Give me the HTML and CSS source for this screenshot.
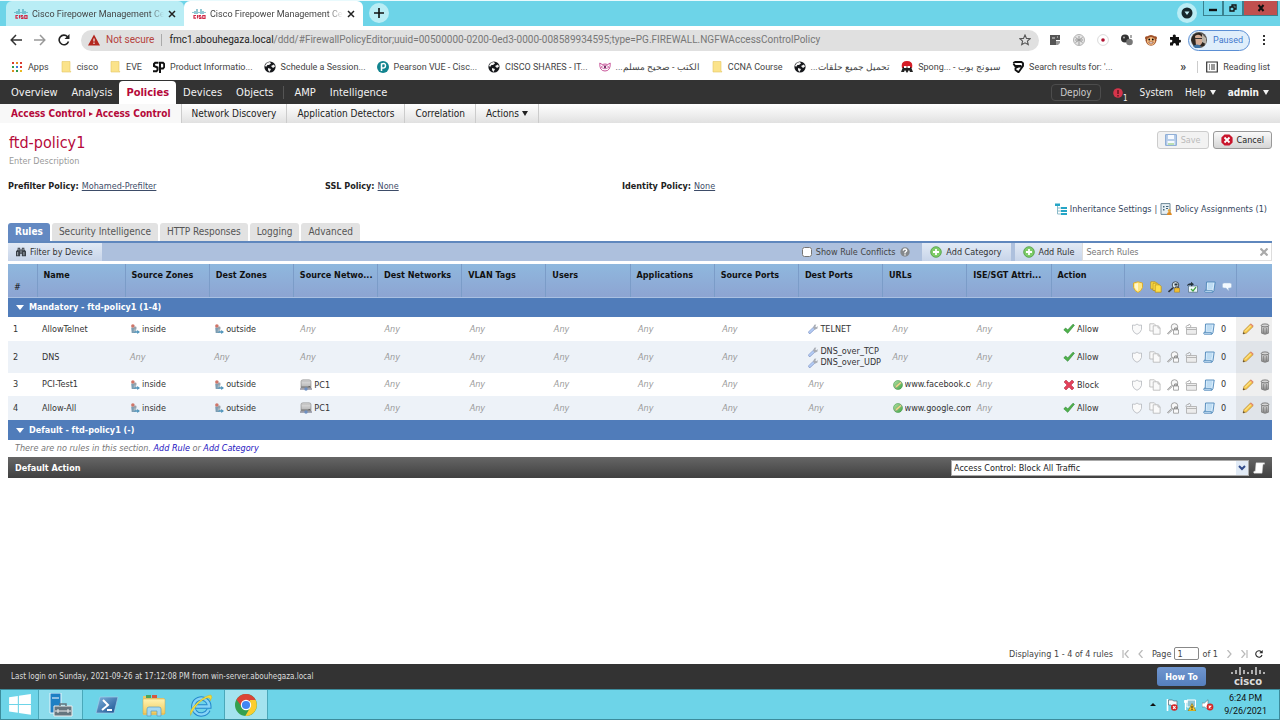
FILE: index.html
```html
<!DOCTYPE html>
<html lang="en">
<head>
<meta charset="utf-8">
<title>Cisco Firepower Management Center</title>
<link rel="stylesheet" href="styles.css">
</head>
<body>
<svg class="defs" aria-hidden="true">
  <defs>
    <linearGradient id="gfolder" x2="0" y2="1"><stop stop-color="#fff3b0"/><stop offset="1" stop-color="#f0c95a"/></linearGradient>
    <linearGradient id="ggreen" x2="1" y2="1"><stop stop-color="#b4e3a4"/><stop offset="1" stop-color="#3fa544"/></linearGradient>
    <linearGradient id="ggrey" x2="0" y2="1"><stop stop-color="#d8d8d8"/><stop offset="1" stop-color="#858585"/></linearGradient>
    <linearGradient id="gps" x2="1" y2="1"><stop stop-color="#7fb2de"/><stop offset="1" stop-color="#174f8d"/></linearGradient>
  </defs>
  <symbol id="favicon" viewBox="0 0 14 10"><path d="M1 3v1M3 2v3M5 0v5M7 3v1M9 0v5M11 2v3M13 3v1" stroke="#3b9bb0" stroke-width="1.1"/><path d="M4 6.500H2v2.600h2M5.500 6v3.600M9 6.500H7.200V8H9v1.500H7M10.800 6.500H13v3h-2.200z" stroke="#d02c4a" stroke-width="1.200" fill="none"/></symbol>
  <symbol id="x" viewBox="0 0 8 8"><path d="M1 1l6 6M7 1L1 7" stroke="currentColor" stroke-width="1.500"/></symbol>
  <symbol id="plus" viewBox="0 0 10 10"><path d="M5 0v10M0 5h10" stroke="#111" stroke-width="1.600"/></symbol>
  <symbol id="back" viewBox="0 0 12 12"><path d="M12 6H1.500M6 1L1.200 6 6 11" fill="none" stroke="currentColor" stroke-width="1.500"/></symbol>
  <symbol id="reload" viewBox="0 0 12 12"><path d="M10.500 7.500A4.800 4.800 0 1 1 9.500 2.700" fill="none" stroke="#222" stroke-width="1.600"/><path d="M11.500 0v5H6.500z" fill="#222"/></symbol>
  <symbol id="warn" viewBox="0 0 12 11"><path d="M6 0l6 11H0z" fill="#b3261e"/><path d="M6 4v3M6 8v1.400" stroke="#eee" stroke-width="1.200"/></symbol>
  <symbol id="star" viewBox="0 0 12 12"><path d="M6 1l1.500 3.400 3.700.3-2.800 2.400.9 3.600L6 8.800 2.700 10.700l.9-3.600L.8 4.700l3.700-.3z" fill="none" stroke="#555" stroke-width="1.100"/></symbol>
  <symbol id="folder" viewBox="0 0 10 12"><path d="M1 .5h8v9l1 1.500H1z" fill="#fbe38b" stroke="#e4c765" stroke-width=".6"/></symbol>
  <symbol id="apps" viewBox="0 0 12 12"><g fill="#d93a30"><path d="M1 1h2v2H1zM9 1h2v2H9zM9 5h2v2H9z"/></g><path d="M5 1h2v2H5zM1 9h2v2H1z" fill="#e08a20"/><path d="M1 5h2v2H1zM5 9h2v2H5z" fill="#2e9c4b"/><path d="M5 5h2v2H5z" fill="#3a7de0"/><path d="M9 9h2v2H9z" fill="#e8b820"/></symbol>
  <symbol id="globe" viewBox="0 0 12 12"><circle cx="6" cy="6" r="5.600" fill="#16181c"/><path d="M3 1.800l3-.8 1 1.500-2 1.500H3.500L2 6 1 4.500zM7 5l3-1.500 1 2-2 1.500zM4 7l3 1-1.500 3L4 9z" fill="#f5f5f5"/></symbol>
  <symbol id="cube" viewBox="0 0 12 12"><path d="M1.200 2L3 1h6.500l1.500 1.200V5L6.500 11.200 3.500 9V7L7 5.500h2M1.500 2.500L3 5h6.500" fill="none" stroke="#111" stroke-width="1.900" stroke-linejoin="round"/></symbol>
  <symbol id="shield" viewBox="0 0 12 12"><path d="M1.500 2L6 .8 10.500 2v4.500Q9.500 10 6 11.500 2.500 10 1.500 6.500z" fill="#ffe680" stroke="#d8a928" stroke-width=".9"/><path d="M6 2v8Q3.200 8.800 2.800 6V3z" fill="#fff7cc"/></symbol>
  <symbol id="shieldo" viewBox="0 0 12 12"><path d="M1.500 2l2.500.3L6 1l2 1.300 2.500-.3v4.500Q9.500 10 6 11.300 2.500 10 1.500 6.500z" fill="#fafafa" stroke="#b4b8bc" stroke-width=".8"/></symbol>
  <symbol id="pages" viewBox="0 0 12 12"><g fill="#ffe04a" stroke="#b58b16" stroke-width=".7"><path d="M.8.8h4.500l1.500 1.500V8h-6z"/><path d="M3 2.200h4.500L9 3.700v5.800H3z"/><path d="M5.200 3.800h4.300l1.700 1.700v5.700h-6z"/></g></symbol>
  <symbol id="pageso" viewBox="0 0 12 12"><g fill="#fafafa" stroke="#acacac" stroke-width=".7"><path d="M.8.8h4.500l1.500 1.500V8h-6z"/><path d="M4.200 2.800h5l1.900 1.900v6.500h-6.900z"/><path d="M9 3v2h2" fill="none"/></g></symbol>
  <symbol id="spy" viewBox="0 0 12 12"><circle cx="7.500" cy="4" r="3.300" fill="#dcebf2" stroke="#46505a"/><path d="M.5 11L5 6.800" stroke="#30363c" stroke-width="1.700"/><path d="M6.500 2.500h3v2h-3z" fill="#29323a"/><path d="M6.500 7h5v4.200h-5z" fill="#f0bd32" stroke="#a17d18" stroke-width=".5"/><path d="M7.500 7V5.800h3V7" fill="none" stroke="#555"/></symbol>
  <symbol id="spyo" viewBox="0 0 12 12"><circle cx="7.500" cy="4" r="3.300" fill="#f8f8f8" stroke="#8f8f8f" stroke-width=".8"/><path d="M.7 11L5 6.800" stroke="#888" stroke-width="1.700"/><path d="M.9 10.800L5 6.900" stroke="#f4f4f4" stroke-width=".7"/><path d="M6.500 7h5v4.200h-5z" fill="#fafafa" stroke="#888" stroke-width=".7"/><path d="M7.700 7V5h2.500v2" fill="none" stroke="#777" stroke-width=".9"/></symbol>
  <symbol id="boxh" viewBox="0 0 12 12"><path d="M2.500 5h9v6.200h-9z" fill="#eef7fb" stroke="#42606e" stroke-width=".6"/><path d="M5 8l2 2 3-3.800" fill="none" stroke="#41a441" stroke-width="1.300"/><path d="M1 5Q1.500 2 5 2.200V.7l3 2.500-3 2.300V4Q3 3.600 1 5z" fill="#26333c"/></symbol>
  <symbol id="boxo" viewBox="0 0 12 12"><path d="M1.500 4.500h10v6.800h-10z" fill="#ececec" stroke="#a0a0a0" stroke-width=".7"/><path d="M1.500 6.500h10M.7 4.500Q1 2 4 2.200V1l2.200 2L4 5" fill="none" stroke="#a8a8a8" stroke-width=".8"/></symbol>
  <symbol id="scroll" viewBox="0 0 12 12"><path d="M2.500 1h8.700L10 9.500l-1 1.700H1.200q-1-.8 0-2h1z" fill="#d6ebfb" stroke="#4d86b8" stroke-width=".9"/><path d="M1.500 9.400h6.800v1.700" fill="none" stroke="#4d86b8" stroke-width=".8"/><path d="M4 3h5M4 5h5M3.800 7h4.500" stroke="#9cc8ea" stroke-width=".8"/></symbol>
  <symbol id="scrollw" viewBox="0 0 12 12"><path d="M3 .8h8.500v1.400H10l-.9 9H1q-.9-.9 0-2h1.200z" fill="#fff" stroke="#ccc" stroke-width=".4"/></symbol>
  <symbol id="bubble" viewBox="0 0 10 10"><path d="M2 1h6q1.500 0 1.500 1.500v2Q9.500 6 8 6H6.500l.3 3L4 6H2Q.5 6 .5 4.500v-2Q.5 1 2 1z" fill="#f4faff" stroke="#a2bcda" stroke-width=".5"/></symbol>
  <symbol id="zone" viewBox="0 0 10 10"><path d="M1.200 3.500h3.300l1 2V9H1.700z" fill="#7d9db2"/><circle cx="2.900" cy="2" r="1.800" fill="#cf7568"/><path d="M3.700 5.200h2.600V8H3.700z" fill="#a8b9c4"/><circle cx="5.200" cy="4" r="1.400" fill="#9aa3ab"/><path d="M4.500 7.300h2.700V6L10 8 7.200 9.900V8.700H4.500z" fill="#4f94bb"/></symbol>
  <symbol id="host" viewBox="0 0 12 12"><path d="M1 2.500Q1 .8 3 .8h6q2 0 2 1.700V9H1z" fill="url(#ggrey)" stroke="#888" stroke-width=".6"/><path d="M1.500 4h9M1.500 6h9" stroke="#f2f2f2" stroke-width=".8"/><path d="M0 10h12" stroke="#778" stroke-width="1.200"/><circle cx="6" cy="10" r="1.700" fill="#6d8fc0"/><path d="M8.500 7.500H10" stroke="#666"/></symbol>
  <symbol id="wrench" viewBox="0 0 10 10"><path d="M1.800 8.300L6 4.200" stroke="#8398c9" stroke-width="3" stroke-linecap="round"/><path d="M1.800 8.100L6 4.200" stroke="#b4ccf4" stroke-width="1.900" stroke-linecap="round"/><path d="M5 3.700L6.300.8 8.300.5 7.300 2.500l1 .8L9.700 2l-.2 2.500-2.700 1.200z" fill="#a9adb5"/></symbol>
  <symbol id="url" viewBox="0 0 10 10"><circle cx="5" cy="5" r="4.500" fill="url(#ggreen)" stroke="#4a9a50" stroke-width=".6"/><path d="M2 8l1-2.400L7.500 1.700 8.600 3 4 7.300z" fill="#f4df85" stroke="#888" stroke-width=".4"/></symbol>
  <symbol id="tick" viewBox="0 0 12 12"><path d="M.8 6.800L2.700 5l2 2L10 1.200l1.400 1.100-6.700 8z" fill="#50b34a" stroke="#258131" stroke-width=".6"/></symbol>
  <symbol id="block" viewBox="0 0 12 12"><path d="M3 1l3 3 3-3 2 2-3 3 3 3-2 2-3-3-3 3-2-2 3-3-3-3z" fill="#e4405a" stroke="#a5263a" stroke-width=".5"/></symbol>
  <symbol id="pencil" viewBox="0 0 12 12"><path d="M1 11l1-3.500L8.500 1l2.700 2.500L4.500 10z" fill="#f7c949" stroke="#a87624" stroke-width=".6"/><path d="M8 1.500L9 .5l2.500 2.300-1 1.200z" fill="#e2876d"/><path d="M3 8.500l6-6" stroke="#fff0aa"/><path d="M1 11l.6-1.800 1.400 1z" fill="#333"/></symbol>
  <symbol id="bin" viewBox="0 0 10 12"><path d="M1.500 2.500h7v7.700Q5 12.500 1.500 10.200z" fill="url(#ggrey)" stroke="#777" stroke-width=".7"/><ellipse cx="5" cy="2.400" rx="3.800" ry="1.500" fill="#d5d5d5" stroke="#555" stroke-width=".7"/><path d="M3.500 5v5M6.500 5v5" stroke="#777" stroke-width=".6"/></symbol>
  <symbol id="add" viewBox="0 0 12 12"><circle cx="6" cy="6" r="5.300" fill="#7fcc68" stroke="#4a9c40" stroke-width=".8"/><path d="M6 3v6M3 6h6" stroke="#fff" stroke-width="1.800"/></symbol>
  <symbol id="first" viewBox="0 0 8 8"><path d="M1 0v8M6.500 0L3 4l3.500 4" fill="none" stroke="#b9b9b9" stroke-width="1.200"/></symbol>
  <symbol id="prev" viewBox="0 0 8 8"><path d="M5.500 0L2 4l3.500 4" fill="none" stroke="#b9b9b9" stroke-width="1.200"/></symbol>
</svg>

<header class="browser">
  <div class="tabstrip">
    <div class="tab"><svg class="fav"><use href="#favicon"/></svg><span class="tabtitle">Cisco Firepower Management Ce</span><button class="bare" aria-label="Close tab"><svg class="i8"><use href="#x"/></svg></button></div>
    <div class="tab current"><svg class="fav"><use href="#favicon"/></svg><span class="tabtitle">Cisco Firepower Management Ce</span><button class="bare" aria-label="Close tab"><svg class="i8"><use href="#x"/></svg></button></div>
    <button class="round newtab" aria-label="New tab"><svg class="i10"><use href="#plus"/></svg></button>
    <button class="round media" aria-label="Tab search"><svg class="i12" viewBox="0 0 12 12"><circle cx="6" cy="6" r="5.500" fill="#17282c"/><path d="M3.500 4.500h5L6 8z" fill="#c4f0f6"/></svg></button>
    <div class="winbtns">
      <button aria-label="Minimize"><svg class="i8" viewBox="0 0 8 8"><path d="M0 6h8" stroke="#111" stroke-width="2.400"/></svg></button>
      <button aria-label="Restore"><svg class="i8" viewBox="0 0 8 8"><path d="M1 3h4v4H1zM3 3V1h4v4H5" fill="none" stroke="#111" stroke-width="1.300"/></svg></button>
      <button class="close" aria-label="Close"><svg class="i8" viewBox="0 0 8 8"><path d="M1.500 1l5 6M6.500 1l-5 6" stroke="#111" stroke-width="2"/></svg></button>
    </div>
  </div>
  <div class="toolbar">
    <div class="history"><button class="bare" aria-label="Back"><svg class="i12"><use href="#back"/></svg></button>
    <button class="bare fwd" aria-label="Forward"><svg class="i12 flip"><use href="#back"/></svg></button>
    <button class="bare" aria-label="Reload"><svg class="i12"><use href="#reload"/></svg></button></div>
    <div class="omnibox"><svg class="i12"><use href="#warn"/></svg><span class="insecure">Not secure</span><span class="url"><b>fmc1.abouhegaza.local</b>/ddd/#FirewallPolicyEditor;uuid=00500000-0200-0ed3-0000-008589934595;type=PG.FIREWALL.NGFWAccessControlPolicy</span><button class="bare" aria-label="Bookmark"><svg class="i12"><use href="#star"/></svg></button></div>
    <div class="exts">
      <svg class="i12" viewBox="0 0 12 12"><path d="M1 1h10v5H7v5H1z" fill="#555"/><path d="M3 4h3M8 3h1" stroke="#ddd"/><path d="M7 7h4v2L9 11H7z" fill="#999"/></svg>
      <svg class="i12" viewBox="0 0 12 12"><circle cx="6" cy="6" r="5.500" fill="#e4e4e4" stroke="#b4b4b4"/><path d="M6 2v9M2.500 3.500l7 5M9.500 3.500l-7 5M2 6h8" stroke="#999"/></svg>
      <svg class="i12" viewBox="0 0 12 12"><circle cx="6" cy="6" r="5.400" fill="#fff" stroke="#ccc" stroke-width=".7"/><circle cx="6" cy="6" r="1.800" fill="#b01030"/></svg>
      <svg class="i12" viewBox="0 0 12 12"><circle cx="4" cy="4.500" r="4" fill="#333"/><circle cx="3" cy="3.500" r="1" fill="#aaa"/><circle cx="8.500" cy="8" r="3.300" fill="#777"/><path d="M10 1v3" stroke="#aaa" stroke-width="2"/></svg>
      <svg class="i12" viewBox="0 0 12 12"><circle cx="1.700" cy="4" r="1.700" fill="#9c4a20"/><circle cx="10.300" cy="4" r="1.700" fill="#9c4a20"/><circle cx="6" cy="6.300" r="5.400" fill="#a0522a"/><path d="M2.500 4.500Q6 1.500 9.500 4.500l.6 3Q9 11.300 6 11.300T1.900 7.500z" fill="#f2bb80"/><circle cx="4.200" cy="5.500" r=".9"/><circle cx="7.800" cy="5.500" r=".9"/><path d="M3.700 8h4.600Q7.500 10 6 10T3.700 8z" fill="#fff" stroke="#7a2d15" stroke-width=".6"/></svg>
      <svg class="i12" viewBox="0 0 12 12"><path d="M1 3h3q-.8-2.500 1.300-2.500T6.700 3H10v3q2-.6 2 1.200T10 8.600V11.500H7Q7.300 9 5.500 9T4 11.500H1V8.600Q3.400 8.600 3.400 7T1 5.800z" fill="#111"/></svg>
    </div>
    <button class="profile"><svg class="avatar" viewBox="0 0 16 16"><circle cx="8" cy="8" r="8" fill="#5a5550"/><path d="M0 8Q2 0 9 1l6 5-2 8H3z" fill="#2c2620"/><path d="M4 4q4-3 7 1v6q-2 4-6 2z" fill="#d3ab94"/><path d="M4 6.500h7" stroke="#333"/><path d="M11 2l4 4v6l-4-2z" fill="#b9b2a6"/><path d="M2 14q4-3 8 0l-1 2H4z" fill="#3c70a0"/></svg>Paused</button>
    <button class="bare" aria-label="Menu"><svg class="i12" viewBox="0 0 12 12"><path d="M5 1h2v2H5zM5 5h2v2H5zM5 9h2v2H5z" fill="#333"/></svg></button>
  </div>
  <nav class="bookmarks" aria-label="Bookmarks">
    <a href="#"><svg class="i12"><use href="#apps"/></svg>Apps</a>
    <a href="#"><svg class="i12"><use href="#folder"/></svg>cisco</a>
    <a href="#"><svg class="i12"><use href="#folder"/></svg>EVE</a>
    <a href="#"><svg class="i12" viewBox="0 0 12 12"><path d="M5.500 1.700H2.200L1 3v2l3.500 1.500V9L3.500 10.300H0M7 12V1.700h3L11.200 3v3L10 7.500H7" fill="none" stroke="#111" stroke-width="2"/></svg>Product Informatio...</a>
    <a href="#"><svg class="i12"><use href="#globe"/></svg>Schedule a Session...</a>
    <a href="#"><svg class="i12" viewBox="0 0 12 12"><circle cx="6" cy="6" r="6" fill="#12848f"/><path d="M4.500 10V3Q8.500 1.500 8.500 4.500T4.800 6.800" fill="none" stroke="#fff" stroke-width="1.500"/></svg>Pearson VUE - Cisc...</a>
    <a href="#"><svg class="i12"><use href="#globe"/></svg>CISCO SHARES - IT...</a>
    <a href="#"><svg class="i12" viewBox="0 0 12 12"><path d="M.8 2q2.200 2.500 5.200 1 3 1.500 5.200-1 .5 8-5.200 8T.8 2z" fill="none" stroke="#c2448f" stroke-width=".9"/><path d="M2 6q4-3.500 8 0-4 3.500-8 0z" fill="none" stroke="#c2448f" stroke-width=".7"/><circle cx="6" cy="6" r="1.200" fill="#713366"/></svg><span dir="rtl">الكتب - صحيح مسلم...</span></a>
    <a href="#"><svg class="i12"><use href="#folder"/></svg>CCNA Course</a>
    <a href="#"><svg class="i12"><use href="#globe"/></svg><span dir="rtl">تحميل جميع حلقات...</span></a>
    <a href="#"><svg class="i12" viewBox="0 0 12 12"><path d="M1 7Q-.5 0 6 0t5 7z" fill="#d51d26"/><path d="M2 6h8l2 5H9l-1-2-2 3-2-3-1 2H0z" fill="#222"/><path d="M3 5h2.500v2H3zM6.500 5H9v2H6.500z" fill="#fff"/></svg><span dir="rtl">سبونج بوب - Spong...&lrm;</span></a>
    <a href="#"><svg class="i12"><use href="#cube"/></svg>Search results for: '...</a>
    <button class="bare more" aria-label="More bookmarks">»</button>
    <a href="#" class="reading"><svg class="i12" viewBox="0 0 12 12"><path d="M.7 1h10.600v10H.7z" fill="none" stroke="#333" stroke-width="1.200"/><path d="M3 4h1M5 4h4M3 6h1M5 6h4M3 8h1M5 8h4" stroke="#333"/></svg>Reading list</a>
  </nav>
</header>

<div class="app">
  <nav class="mainnav" aria-label="Main">
    <a href="#">Overview</a><a href="#">Analysis</a><a href="#" class="on">Policies</a><a href="#">Devices</a><a href="#">Objects</a><span class="sep"></span><a href="#">AMP</a><a href="#">Intelligence</a>
    <div class="right"><button class="deploy">Deploy</button><a href="#" class="alert" aria-label="Alerts"><svg class="i10" viewBox="0 0 10 10"><circle cx="5" cy="5" r="4.800" fill="#d5354b"/><path d="M5 2v4M5 7v1.500" stroke="#501018" stroke-width="1.300"/></svg><sub>1</sub></a><a href="#">System</a><a href="#">Help <i class="tri"></i></a><a href="#" class="bold">admin <i class="tri"></i></a></div>
  </nav>
  <nav class="subnav" aria-label="Policies">
    <a href="#" class="on">Access Control <i class="rtri"></i> Access Control</a><a href="#">Network Discovery</a><a href="#">Application Detectors</a><a href="#">Correlation</a><a href="#">Actions <i class="tri"></i></a>
  </nav>

  <main>
    <div class="head">
      <div><h1>ftd-policy1</h1><p class="desc">Enter Description</p></div>
      <div class="btns"><button class="btn" disabled><svg class="i12" viewBox="0 0 12 12"><path d="M.6.600h10.800v10.800H.6z" fill="#b7cde9" stroke="#88a9d4"/><path d="M3 1h6v4H3zM2.500 7h7v4h-7z" fill="#f6faff"/><path d="M3 10h6" stroke="#a8d69a" stroke-width="1.500"/></svg>Save</button><button class="btn"><svg class="i12" viewBox="0 0 12 12"><path d="M3.500.4h5l3.100 3.100v5l-3.100 3.100h-5L.4 8.500v-5z" fill="#c9152c"/><path d="M3.500 3.500l5 5M8.500 3.500l-5 5" stroke="#fff" stroke-width="1.800"/></svg>Cancel</button></div>
    </div>
    <div class="policies">
      <div><b>Prefilter Policy:</b><a href="#">Mohamed-Prefilter</a></div>
      <div><b>SSL Policy:</b><a href="#">None</a></div>
      <div><b>Identity Policy:</b><a href="#">None</a></div>
    </div>
    <div class="links">
      <a href="#"><svg class="i12" viewBox="0 0 12 12"><path d="M0 .5h5v2.500H0zM6 4h6v2H6zM6 7h6v2H6zM6 10h6v2H6z" fill="#25a5c6"/><path d="M2.500 3v8H6M2.500 5H6M2.500 8H6" fill="none" stroke="#8bbbc9"/></svg>Inheritance Settings</a><span>|</span>
      <a href="#"><svg class="i12" viewBox="0 0 12 12"><path d="M1 .6h9v10.800H1z" fill="#e6eff4" stroke="#6d8797"/><path d="M3 3h1.500v1.500H3zM3 6h1.500v1.500H3z" fill="#45667a"/><path d="M6 3.500h2.500M6 5.500h2" stroke="#45667a"/><circle cx="9.300" cy="7.500" r="1.500" fill="#e5a640"/><path d="M7 12q0-3 2.300-3t2.500 3z" fill="#e08b22"/></svg>Policy Assignments (1)</a>
    </div>
    <div class="tabs" role="tablist">
      <button role="tab" aria-selected="true" class="on">Rules</button><button role="tab">Security Intelligence</button><button role="tab">HTTP Responses</button><button role="tab">Logging</button><button role="tab">Advanced</button>
    </div>
    <div class="gridbar">
      <button class="gb"><svg class="i10" viewBox="0 0 12 12"><path d="M2 1h3v2h2V1h3v2l2 2v6H7V8H5v3H0V5l2-2z" fill="#3a4048"/><path d="M2 6v4M9.500 6v4M6 4v3M3.500 2v2M8.500 2v2" stroke="#b8c0ca"/></svg>Filter by Device</button>
      <label class="conf"><input type="checkbox">Show Rule Conflicts</label>
      <svg class="i10 help" viewBox="0 0 10 10"><circle cx="5" cy="5" r="4.700" fill="#85888b"/><path d="M3.200 3.700Q3.500 2 5 2t1.700 1.700L5 5.500v1M5 7.200v1.200" fill="none" stroke="#fff" stroke-width="1.300"/></svg>
      <button class="gb"><svg class="i12"><use href="#add"/></svg>Add Category</button>
      <button class="gb last"><svg class="i12"><use href="#add"/></svg>Add Rule</button>
      <div class="search"><input type="text" placeholder="Search Rules" aria-label="Search Rules"><button class="bare" aria-label="Clear"><svg class="i8" viewBox="0 0 8 8"><path d="M.5.500l7 7M7.500.500l-7 7" stroke="#aaa" stroke-width="2.200"/></svg></button></div>
    </div>

    <table class="rules">
      <colgroup><col class="cnum"><col class="cname"><col><col><col><col><col><col><col><col><col><col><col><col class="cact"><col class="cico"><col class="cedit"></colgroup>
      <thead><tr>
        <th class="low num">#</th><th>Name</th><th>Source Zones</th><th>Dest Zones</th><th>Source Netwo...</th><th>Dest Networks</th><th>VLAN Tags</th><th>Users</th><th>Applications</th><th>Source Ports</th><th>Dest Ports</th><th>URLs</th><th>ISE/SGT Attri...</th><th>Action</th>
        <th class="low"><div class="icons"><svg class="i12"><use href="#shield"/></svg><svg class="i12"><use href="#pages"/></svg><svg class="i12"><use href="#spy"/></svg><svg class="i12"><use href="#boxh"/></svg><svg class="i12"><use href="#scroll"/></svg><svg class="i10"><use href="#bubble"/></svg></div></th><th></th>
      </tr></thead>
      <tbody>
        <tr class="group"><th colspan="16"><button class="bare"><i class="tri"></i>Mandatory - ftd-policy1 (1-4)</button></th></tr>
        <tr><td>1</td><td>AllowTelnet</td><td><svg class="i10"><use href="#zone"/></svg>inside</td><td><svg class="i10"><use href="#zone"/></svg>outside</td><td class="any">Any</td><td class="any">Any</td><td class="any">Any</td><td class="any">Any</td><td class="any">Any</td><td class="any">Any</td><td class="port"><svg class="i10"><use href="#wrench"/></svg>TELNET</td><td class="any">Any</td><td class="any">Any</td><td class="act"><svg class="i12"><use href="#tick"/></svg>Allow</td><td class="ic"><div class="icons"><svg class="i12"><use href="#shieldo"/></svg><svg class="i12"><use href="#pageso"/></svg><svg class="i12"><use href="#spyo"/></svg><svg class="i12"><use href="#boxo"/></svg><svg class="i12"><use href="#scroll"/></svg><span>0</span></div></td><td class="edit"><button class="bare" aria-label="Edit"><svg class="i12"><use href="#pencil"/></svg></button><button class="bare" aria-label="Delete"><svg class="i12"><use href="#bin"/></svg></button></td></tr>
        <tr class="alt tall"><td>2</td><td>DNS</td><td class="any">Any</td><td class="any">Any</td><td class="any">Any</td><td class="any">Any</td><td class="any">Any</td><td class="any">Any</td><td class="any">Any</td><td class="any">Any</td><td class="port"><svg class="i10"><use href="#wrench"/></svg>DNS_over_TCP<br><svg class="i10"><use href="#wrench"/></svg>DNS_over_UDP</td><td class="any">Any</td><td class="any">Any</td><td class="act"><svg class="i12"><use href="#tick"/></svg>Allow</td><td class="ic"><div class="icons"><svg class="i12"><use href="#shieldo"/></svg><svg class="i12"><use href="#pageso"/></svg><svg class="i12"><use href="#spyo"/></svg><svg class="i12"><use href="#boxo"/></svg><svg class="i12"><use href="#scroll"/></svg><span>0</span></div></td><td class="edit"><button class="bare" aria-label="Edit"><svg class="i12"><use href="#pencil"/></svg></button><button class="bare" aria-label="Delete"><svg class="i12"><use href="#bin"/></svg></button></td></tr>
        <tr class="short"><td>3</td><td>PCI-Test1</td><td><svg class="i10"><use href="#zone"/></svg>inside</td><td><svg class="i10"><use href="#zone"/></svg>outside</td><td><svg class="i12"><use href="#host"/></svg>PC1</td><td class="any">Any</td><td class="any">Any</td><td class="any">Any</td><td class="any">Any</td><td class="any">Any</td><td class="any">Any</td><td class="site"><div><svg class="i10"><use href="#url"/></svg><span>www.facebook.com</span></div></td><td class="any">Any</td><td class="act"><svg class="i12"><use href="#block"/></svg>Block</td><td class="ic"><div class="icons"><svg class="i12"><use href="#shieldo"/></svg><svg class="i12"><use href="#pageso"/></svg><svg class="i12"><use href="#spyo"/></svg><svg class="i12"><use href="#boxo"/></svg><svg class="i12"><use href="#scroll"/></svg><span>0</span></div></td><td class="edit"><button class="bare" aria-label="Edit"><svg class="i12"><use href="#pencil"/></svg></button><button class="bare" aria-label="Delete"><svg class="i12"><use href="#bin"/></svg></button></td></tr>
        <tr class="alt"><td>4</td><td>Allow-All</td><td><svg class="i10"><use href="#zone"/></svg>inside</td><td><svg class="i10"><use href="#zone"/></svg>outside</td><td><svg class="i12"><use href="#host"/></svg>PC1</td><td class="any">Any</td><td class="any">Any</td><td class="any">Any</td><td class="any">Any</td><td class="any">Any</td><td class="any">Any</td><td class="site"><div><svg class="i10"><use href="#url"/></svg><span>www.google.com</span></div></td><td class="any">Any</td><td class="act"><svg class="i12"><use href="#tick"/></svg>Allow</td><td class="ic"><div class="icons"><svg class="i12"><use href="#shieldo"/></svg><svg class="i12"><use href="#pageso"/></svg><svg class="i12"><use href="#spyo"/></svg><svg class="i12"><use href="#boxo"/></svg><svg class="i12"><use href="#scroll"/></svg><span>0</span></div></td><td class="edit"><button class="bare" aria-label="Edit"><svg class="i12"><use href="#pencil"/></svg></button><button class="bare" aria-label="Delete"><svg class="i12"><use href="#bin"/></svg></button></td></tr>
        <tr class="group"><th colspan="16"><button class="bare"><i class="tri"></i>Default - ftd-policy1 (-)</button></th></tr>
        <tr class="empty"><td colspan="16">There are no rules in this section. <a href="#">Add Rule</a> or <a href="#">Add Category</a></td></tr>
      </tbody>
    </table>
    <div class="default"><label for="da">Default Action</label><select id="da"><option>Access Control: Block All Traffic</option></select><button class="bare" aria-label="Logging"><svg class="i12"><use href="#scrollw"/></svg></button></div>

    <div class="pager"><span class="count">Displaying 1 - 4 of 4 rules</span><button class="bare" aria-label="First"><svg class="i8"><use href="#first"/></svg></button><button class="bare" aria-label="Previous"><svg class="i8"><use href="#prev"/></svg></button><div class="page"><label for="pg">Page</label><input id="pg" type="text" value="1"><span>of 1</span></div><button class="bare" aria-label="Next"><svg class="i8 flip"><use href="#prev"/></svg></button><button class="bare" aria-label="Last"><svg class="i8 flip"><use href="#first"/></svg></button><button class="bare" aria-label="Refresh"><svg class="i8" viewBox="0 0 12 12"><use href="#reload"/></svg></button></div>
  </main>
  <footer class="status"><span>Last login on Sunday, 2021-09-26 at 17:12:08 PM from win-server.abouhegaza.local</span><button class="howto">How To</button><div class="logo"><svg class="bars" viewBox="0 0 34 10"><path d="M1 5v2M5 3v4M9 0v8M13 3v4M17 5v2M21 3v4M25 0v8M29 3v4M33 5v2" stroke="currentColor" stroke-width="1.600"/></svg><span>cisco</span></div></footer>
</div>

<div class="taskbar">
  <button class="start" aria-label="Start"><svg viewBox="0 0 22 22"><path d="M1 4l8-1.200V10H1zM10 2.600L21 1v9H10zM1 11h8v7.200L1 17zM10 11h11v9l-11-1.600z" fill="#fff"/></svg></button>
  <button class="run" aria-label="Server Manager"><svg viewBox="0 0 24 24"><path d="M1 0h11v20H1z" fill="#1e7fc4" stroke="#e6f5fb"/><path d="M3 5h7" stroke="#fff"/><path d="M5 13h18v10H5z" fill="#66757e" stroke="#eee"/><path d="M11 13v-2h6v2" fill="none" stroke="#66757e" stroke-width="1.500"/><path d="M6 18h16M9 16v4M19 16v4" stroke="#eee"/></svg></button>
  <button aria-label="PowerShell"><svg viewBox="0 0 24 24"><path d="M5 4h18l-4 16H1z" fill="url(#gps)" stroke="#a3cbe8" stroke-width=".7"/><path d="M8 7l5 5-6 5M12 17h5" fill="none" stroke="#fff" stroke-width="2"/></svg></button>
  <button aria-label="File Explorer"><svg viewBox="0 0 24 24"><path d="M1 3h7l1 2h13v17H1z" fill="#eac96d"/><path d="M4 2h5v3H4z" fill="#4aa55c"/><path d="M10 2h5v3h-5z" fill="#d45740"/><path d="M1 6h22v15H1z" fill="url(#gfolder)" stroke="#c9a54c" stroke-width=".5"/><path d="M5 23v-7q0-2 2-2h10q2 0 2 2v7h-4v-5H9v5z" fill="#a5d9f2" stroke="#5a9fc4" stroke-width=".7"/></svg></button>
  <button aria-label="Internet Explorer"><svg viewBox="0 0 24 24"><path d="M19.500 17A8 8 0 1 1 20.300 13.500H7" fill="none" stroke="#2387cb" stroke-width="4.400"/><path d="M19.500 17A8 8 0 1 1 20.300 13.500H7" fill="none" stroke="#86d4f7" stroke-width="2.400"/><path d="M2 22Q-1 18 8 10T22 2q2 2-1 6 1-4-3-3Q10 8 5 16T2 22z" fill="#f4dc3c" stroke="#c2a91c" stroke-width=".4"/></svg></button>
  <button class="run active" aria-label="Google Chrome"><svg viewBox="0 0 24 24"><circle cx="12" cy="12" r="11" fill="#34a04f"/><path d="M2.500 6.500A11 11 0 0 1 21.500 6.500L21.500 8H12L8 14z" fill="#db4437"/><path d="M21.600 7A11 11 0 0 1 11.300 23L16.500 14 16 7z" fill="#fbcd2f"/><circle cx="12" cy="12" r="5.200" fill="#fff"/><circle cx="12" cy="12" r="4.100" fill="#4285f4"/></svg></button>
  <div class="tray">
    <i class="utri"></i>
    <svg class="i12" viewBox="0 0 12 12"><path d="M1.500 0v12" stroke="#fff" stroke-width="1.600"/><path d="M2.500 1h4l1 1H11v5H6L5 6H2.500z" fill="#f5f8fa" stroke="#45565e" stroke-width=".6"/><circle cx="8.300" cy="8.500" r="3.300" fill="#d42525"/><path d="M7 7.200l2.600 2.600M9.600 7.200L7 9.800" stroke="#fff" stroke-width="1.100"/></svg>
    <svg class="i12" viewBox="0 0 12 12"><path d="M3 1h8.500v7H3z" fill="#8fc6d6" stroke="#fff"/><path d="M1.500 1v10M0 1v2h3V1" stroke="#fff" stroke-width="1.300" fill="none"/><path d="M8 4.500l4 7.500H4z" fill="#f7c928" stroke="#745c0a" stroke-width=".5"/><path d="M8 7v2.500M8 10v1" stroke="#222"/></svg>
    <svg class="i12" viewBox="0 0 12 12"><path d="M0 4h2.500L6 .7v10L2.500 8H0z" fill="#fff" stroke="#57757f" stroke-width=".6"/><circle cx="8" cy="8" r="3.400" fill="#d42525"/><path d="M6.700 6.700l2.600 2.600M9.300 6.700L6.700 9.300" stroke="#fff" stroke-width="1.100"/></svg>
    <div class="clock"><span>6:24 PM</span><span>9/26/2021</span></div>
  </div>
</div>
</body>
</html>
```
FILE: styles.css
```css
* { box-sizing: border-box; }
body { margin: 0; min-height: 100vh; display: flex; flex-direction: column; background: #fff; color: #333; font: 9px/12px "DejaVu Sans Condensed", "DejaVu Sans", sans-serif; }
button, input, select { font: inherit; color: inherit; margin: 0; padding: 0; border: 0; border-radius: 0; background: none; }
button { cursor: pointer; }
a { color: inherit; text-decoration: none; }
svg { display: block; flex: none; }
.defs { position: absolute; width: 0; height: 0; }
.bare { display: flex; align-items: center; }
.i8 { width: 8px; height: 8px; }
.i10 { width: 10px; height: 10px; }
.i12 { width: 12px; height: 12px; }
.flip { transform: scaleX(-1); }

.browser { background: #fff; font-family: Roboto, "Open Sans", sans-serif; font-size: 9px; }
.tabstrip { display: flex; height: 26px; padding-left: 6px; background: #6dd4e8; border-top: 1px solid #e9fafd; }
.tab { display: flex; align-items: center; gap: 4px; width: 178px; padding: 0 8px; border-radius: 6px 6px 0 0; background: #b9edf5; color: #444; }
.tab.current { width: 179px; background: #fff; }
.tab .i8 { color: #222; }
.fav { width: 14px; height: 10px; }
.tabtitle { flex: 1; overflow: hidden; white-space: nowrap; mask-image: linear-gradient(90deg, #000 88%, transparent); }
.round { display: flex; align-items: center; justify-content: center; width: 20px; height: 20px; margin: 2px 0 0 6px; border-radius: 50%; background: #b9edf5; }
.media { margin-left: auto; margin-right: 6px; }
.winbtns { display: flex; height: 15px; margin-right: 2px; }
.winbtns button { display: flex; align-items: center; justify-content: center; width: 20px; border: 1px solid #39818f; border-top: 0; }
.winbtns .close { width: 35px; background: #c0504f; }
.toolbar { display: flex; align-items: center; height: 28px; padding: 0 10px; }
.history { display: flex; gap: 12px; width: 71px; }
.fwd { color: #999; }
.omnibox { display: flex; align-items: center; flex: 1; min-width: 0; height: 21px; padding: 0 8px 0 7px; border-radius: 11px; background: #e0e0e0; font-size: 10px; }
.insecure { margin: 0 7px 0 6px; padding-right: 7px; border-right: 1px solid #aaa; color: #b5413b; white-space: nowrap; }
.url { flex: 1; overflow: hidden; white-space: nowrap; color: #777; }
.url b { font-weight: 400; color: #222; }
.exts { display: flex; gap: 12px; padding: 0 7px 0 10px; }
.profile { display: flex; align-items: center; gap: 6px; height: 21px; padding: 0 6px 0 2px; margin-right: 8px; border: 1px solid #5b8fd4; border-radius: 11px; background: #dfeefb; color: #3f78cc; }
.avatar { width: 16px; height: 16px; }
.bookmarks { display: flex; align-items: center; height: 26px; padding: 0 10px 0 11px; gap: 11px; white-space: nowrap; color: #444; }
.bookmarks a { display: flex; align-items: center; gap: 5px; }
.more { margin-left: auto; font-weight: 700; font-size: 12px; }
.reading { border-left: 1px solid #ccc; padding-left: 8px; }

.app { flex: 1; display: flex; flex-direction: column; }
.mainnav { display: flex; height: 24px; padding: 1px 5px 0 4px; background: #333; color: #f2f2f2; font-size: 11px; }
.mainnav a { display: flex; align-items: center; gap: 4px; padding: 0 7px; }
.mainnav .on { background: #fff; color: #b5093a; font-weight: 700; border-radius: 4px 4px 0 0; }
.sep { width: 1px; margin: 5px 3px; background: #555; }
.right { display: flex; align-items: stretch; margin-left: auto; font-size: 10px; }
.right a { padding: 0 6px; }
.deploy { align-self: center; height: 17px; width: 50px; margin-right: 6px; border: 1px solid #4c4c4c; border-radius: 4px; color: #ccc; }
.mainnav .alert { gap: 0; }
.alert sub { font-size: 8px; line-height: 10px; align-self: flex-end; }
.bold { font-weight: 700; }
.tri { display: inline-block; border: 3px solid transparent; border-top: 5px solid currentColor; border-bottom: 0; }
.rtri { display: inline-block; border: 2px solid transparent; border-left: 4px solid currentColor; border-right: 0; }
.utri { border: 3px solid transparent; border-bottom: 3px solid #111; border-top: 0; }
.subnav { display: flex; height: 19px; background: linear-gradient(#fff, #e1e1e1); font-size: 10px; color: #222; }
.subnav a { display: flex; align-items: center; gap: 3px; padding: 0 10px; border-right: 1px solid #ccc; }
.subnav .on { color: #b5093a; font-weight: 700; background: #f8f8f8; padding-left: 11px; }

main { flex: 1; display: flex; flex-direction: column; padding: 8px 8px 4px; }
.head { display: flex; justify-content: space-between; }
h1 { margin: 0 1px; font-size: 16px; line-height: 24px; font-weight: 400; color: #b5093a; }
.desc { margin: 0 1px 1px; color: #999; }
.btns { display: flex; align-items: flex-start; gap: 4px; }
.btn { display: flex; align-items: center; gap: 4px; height: 18px; padding: 0 7px; border: 1px solid #999; border-radius: 3px; background: linear-gradient(#fafafa, #d5d5d5); color: #222; }
.btn:disabled { border-color: #ccc; background: #f2f2f2; color: #bbb; }
.policies { display: grid; grid-template-columns: 317fr 297fr 650fr; margin-top: 12px; }
.policies a { margin-left: 3px; color: #3d4c68; text-decoration: underline; }
.policies b { color: #222; }
.links { display: flex; justify-content: flex-end; gap: 3px; margin: 11px 5px 8px 0; color: #33445c; }
.links a { display: flex; gap: 3px; }
.tabs { display: flex; gap: 2px; font-size: 10px; }
.tabs button { height: 18px; padding: 0 7px; border-radius: 3px 3px 0 0; background: #e2e2e2; color: #555; }
.tabs .on { background: #6389c2; color: #fff; font-weight: 700; }
.gridbar { display: flex; align-items: stretch; height: 20px; border-top: 2px solid #5f87bd; background: #adc0dd; margin-bottom: 3px; }
.gb { display: flex; align-items: center; gap: 4px; padding: 0 9px 0 8px; margin-right: 4px; background: linear-gradient(#e2eaf5, #c7d4e9); color: #333; }
.gb.last { padding-right: 8px; margin-right: 0; }
.conf { display: flex; align-items: center; gap: 4px; margin-left: auto; color: #444; }
.conf input { width: 10px; height: 10px; margin: 0; }
.help { margin: 4px 12px 0 5px; }
.search { display: flex; width: 15%; padding-right: 3px; background: #fff; border: 1px solid #ddd; border-top: 0; }
.search input { flex: 1; min-width: 0; padding-left: 3px; }
.search input::placeholder { color: #777; }

.rules { width: 100%; table-layout: fixed; border-collapse: collapse; }
.cnum { width: 29px; }
.cname { width: 88px; }
.cact { width: 73px; }
.cico { width: 112px; }
.cedit { width: 36px; }
thead tr { height: 33px; background: linear-gradient(#8fb8de, #8da4d2); }
thead th { vertical-align: top; padding: 5px 0 0 6px; text-align: left; color: #111; border-right: 1px solid #7b9cc8; border-bottom: 1px solid #a9c0e2; white-space: nowrap; }
thead .low { vertical-align: bottom; padding-bottom: 4px; }
thead .num { font-weight: 400; }
thead th:last-child { border-right: 0; }
.group { background: #507cba; color: #fff; }
.group th { padding: 0 8px; text-align: left; }
.group .bare { gap: 5px; font-weight: 700; }
.group .tri { border-left-width: 4px; border-right-width: 4px; }
tbody tr { height: 24px; }
tbody tr.tall { height: 32px; }
tbody tr.short { height: 23px; }
tbody tr.group { height: 20px; }
.alt { background: #edf2f8; }
td { padding: 0 0 0 5px; line-height: 11px; white-space: nowrap; overflow: hidden; }
td:nth-child(n+5) { padding-left: 7px; }
td:nth-child(n+7) { padding-left: 8px; }
td:nth-child(n+11) { padding-left: 10px; }
td svg { display: inline-block; vertical-align: middle; margin-right: 2px; }
td .icons svg, td .bare svg { margin-right: 0; }
td.any { color: #999; font-style: italic; }
td.act { padding-left: 12px; }
td.site { overflow: visible; }
.site div { display: flex; align-items: center; width: calc(100% + 4px); }
.site span { overflow: hidden; }
.icons { display: flex; align-items: center; gap: 6px; padding-left: 1px; }
td.ic { padding-left: 6px; }
td.edit { background: #efefef; padding-left: 6px; }
.alt td.edit { background: #e0e4e9; }
.edit .bare { display: inline-flex; vertical-align: middle; }
.edit .bare + .bare { margin-left: 5px; }
tbody tr.empty { height: 17px; }
td[colspan] { padding-left: 7px; font-style: italic; color: #777; }
.empty a { color: #1c12c0; }
.default { display: flex; align-items: center; height: 21px; padding: 0 7px; background: linear-gradient(#666, #404040); color: #fff; font-weight: 700; }
.default select { appearance: none; width: 298px; height: 16px; margin: 0 4px 0 auto; padding-left: 2px; background: #fff url("data:image/svg+xml,%3Csvg xmlns='http://www.w3.org/2000/svg' width='12' height='16'%3E%3Cpath d='M0 0h12v16H0z' fill='%23e2ebf6'/%3E%3Cpath d='M3 6l3 3 3-3' fill='none' stroke='%23304a8a' stroke-width='2'/%3E%3C/svg%3E") right no-repeat; color: #222; font-weight: 400; border: 1px solid #aaa; }
.pager { display: flex; align-items: center; justify-content: flex-end; gap: 7px; margin: auto 9px 0 0; color: #444; }
.pager .count { margin-right: 2px; }
.page { display: flex; align-items: center; gap: 3px; }
.pager input { width: 25px; height: 13px; padding-left: 2px; border: 1px solid #888; border-radius: 2px; }
.status { display: flex; align-items: center; height: 25px; padding: 0 15px 0 11px; background: #333; color: #ddd; font-size: 8px; }
.howto { margin: 0 25px 0 auto; width: 49px; height: 19px; border-radius: 3px; background: linear-gradient(#7096cf, #557fbd); color: #fff; font-weight: 700; font-size: 9px; }
.logo { display: flex; flex-direction: column; align-items: center; font: 700 10px/9px "DejaVu Sans", sans-serif; }
.bars { width: 34px; height: 10px; color: #ccc; }

.taskbar { display: flex; height: 31px; background: #6dd4e8; border: 1px solid #3c8c9c; font: 9px/13px Roboto, "Open Sans", sans-serif; color: #111; }
.taskbar button { display: flex; align-items: center; justify-content: center; width: 47px; }
.taskbar button svg { width: 24px; height: 24px; }
.taskbar .start { width: 38px; border-right: 1px solid #4aa8ba; }
.taskbar .run { width: 44px; background: #8cdcec; border-right: 1px solid #4aa8ba; }
.taskbar .active { background: #a4e3ef; border-left: 1px solid #4aa8ba; }
.tray { display: flex; align-items: center; gap: 6px; margin-left: auto; padding-right: 12px; }
.tray .utri { margin-right: 4px; }
.clock { display: flex; flex-direction: column; align-items: center; margin-left: 4px; }
```
